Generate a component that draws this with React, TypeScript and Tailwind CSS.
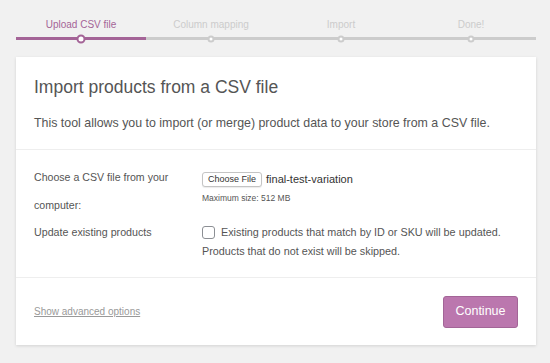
import React from "react";

const steps = ["Upload CSV file", "Column mapping", "Import", "Done!"];

export default function App() {
  return (
    <div
      className="w-[550px] h-[363px] bg-[#f1f1f1] overflow-hidden"
      style={{ fontFamily: '"Liberation Sans", Arial, sans-serif' }}
    >
      <div className="ml-[16px] w-[520px] pt-[18px]">
        {/* Steps */}
        <div className="grid grid-cols-4">
          {steps.map((s, i) => {
            const active = i === 0;
            return (
              <div key={s} className="flex flex-col items-center">
                <div
                  className={`text-[10px] leading-[14px] h-[14px] ${
                    active ? "text-[#a46497]" : "text-[#cccccc]"
                  }`}
                >
                  {s}
                </div>
                <div className="relative w-full h-[3px] mt-[5px]">
                  <div
                    className={`h-[3px] w-full ${
                      active ? "bg-[#a46497]" : "bg-[#cccccc]"
                    }`}
                  />
                  <div
                    className={`absolute left-1/2 top-1/2 -translate-x-1/2 -translate-y-1/2 rounded-full bg-white ${
                      active
                        ? "w-[9px] h-[9px] border-[2px] border-[#a46497]"
                        : "w-[7px] h-[7px] border-[2px] border-[#cccccc]"
                    }`}
                  />
                </div>
              </div>
            );
          })}
        </div>

        {/* Card */}
        <div className="mt-[17px] bg-white shadow-[0_1px_3px_rgba(0,0,0,0.13)] text-[#555555]">
          <div className="px-[18px] pt-[18px] pb-[17px] border-b border-[#eeeeee]">
            <h2 className="text-[17.5px] leading-[24px] font-normal text-[#555555]">
              Import products from a CSV file
            </h2>
            <p className="mt-[16px] text-[12.4px] leading-[17px]">
              This tool allows you to import (or merge) product data to your store from a CSV file.
            </p>
          </div>

          <div className="px-[18px] pt-[19px] pb-[16px] border-b border-[#eeeeee]">
            <div className="flex">
              <div className="w-[168px] text-[10.6px] leading-[28px] -mt-[6px]">
                Choose a CSV file from your
                <br />
                computer:
              </div>
              <div className="mt-[2px]">
                <div className="flex items-center h-[17px]">
                  <span className="inline-flex items-center h-[15px] px-[5px] border border-[#c4c4c4] rounded-[3px] text-[9px] text-[#333] bg-white shadow-[0_1px_1px_rgba(0,0,0,0.08)]">
                    Choose File
                  </span>
                  <span className="ml-[4px] text-[11px] text-[#333]">final-test-variation</span>
                </div>
                <div className="mt-[5px] text-[8.5px] leading-[10px] text-[#555]">
                  Maximum size: 512 MB
                </div>
              </div>
            </div>
            <div className="flex mt-[4px]">
              <div className="w-[168px] text-[10.7px] leading-[18px]">Update existing products</div>
              <div className="text-[10.8px] leading-[19px]">
                <div className="flex items-center">
                  <span className="inline-block w-[13px] h-[13px] border border-[#8c8f94] rounded-[3px] bg-white mr-[6px]" />
                  Existing products that match by ID or SKU will be updated.
                </div>
                <div>Products that do not exist will be skipped.</div>
              </div>
            </div>
          </div>

          <div className="px-[18px] h-[67px] flex items-center justify-between">
            <a className="text-[10px] text-[#999999] underline" href="#">
              Show advanced options
            </a>
            <button className="w-[75px] h-[32px] rounded-[3px] bg-[#bb77ae] text-white text-[12.5px] border border-[#a36597]">
              Continue
            </button>
          </div>
        </div>
      </div>
    </div>
  );
}
